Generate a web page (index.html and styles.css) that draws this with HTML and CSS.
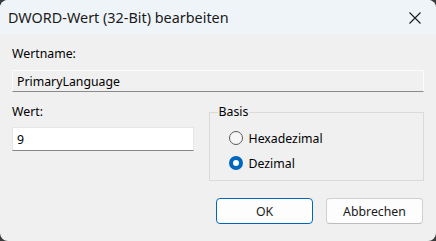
FILE: index.html
```html
<!DOCTYPE html>
<html lang="de">
<head>
    <meta charset="UTF-8">
    <title>DWORD-Wert (32-Bit) bearbeiten</title>
    <link rel="stylesheet" href="styles.css">
</head>
<body>
    <div class="window">
        <div class="titlebar">
            <span class="title">DWORD-Wert (32-Bit) bearbeiten</span>
            <svg class="close" width="12" height="12" viewBox="0 0 12 12">
                <path d="M0.5 0.5 L11.5 11.5 M11.5 0.5 L0.5 11.5" stroke="#1b1b1b" stroke-width="1.1" fill="none"/>
            </svg>
        </div>
        <div class="content">
            <div class="field-label">Wertname:</div>
            <div class="textbox readonly">PrimaryLanguage</div>

            <div class="row">
                <div class="value-col">
                    <div class="field-label">Wert:</div>
                    <div class="textbox value">9</div>
                </div>
                <fieldset class="group">
                    <legend>Basis</legend>
                    <div class="radio">
                        <span class="dot"></span>
                        <span>Hexadezimal</span>
                    </div>
                    <div class="radio">
                        <span class="dot checked"></span>
                        <span>Dezimal</span>
                    </div>
                </fieldset>
            </div>

            <div class="buttons">
                <button class="btn primary">OK</button>
                <button class="btn">Abbrechen</button>
            </div>
        </div>
    </div>
</body>
</html>
```
FILE: styles.css
```css
html, body {
    margin: 0;
    padding: 0;
    background: #3a3a3a;
}

.window {
    width: 436px;
    height: 241px;
    background-color: #f0f0f0;
    border-radius: 8px;
    overflow: hidden;
    font-family: "Noto Sans", "Open Sans", sans-serif;
    font-size: 12.3px;
    color: #000;
}

.titlebar {
    height: 35px;
    background-color: #eff4f9;
    display: flex;
    align-items: center;
    justify-content: space-between;
    padding: 0 15px 0 8px;
    box-sizing: border-box;
}

.title {
    font-size: 14.4px;
    color: #1a1a1a;
    margin-top: -1px;
}

.close {
    display: block;
}

.content {
    padding: 11px 12px 0 12px;
}

.field-label {
    line-height: 16px;
    height: 16px;
}

.textbox {
    box-sizing: border-box;
    border: 1px solid #fafafa;
    border-bottom-color: #868686;
    padding: 0 4px;
    display: flex;
    align-items: center;
}

.readonly {
    margin-top: 8px;
    height: 22px;
    background-color: #f0f0f0;
    border-color: #fbfbfb;
    border-bottom: 1px solid #8a8a8a;
}

.row {
    display: flex;
    gap: 15px;
    margin-top: 12px;
}

.value-col {
    width: 182px;
}

.value {
    margin-top: 7px;
    height: 24px;
    background-color: #fff;
    border-color: #e6e6e6;
    border-bottom-color: #868686;
}

.group {
    margin: 0;
    padding: 9px 0 0 19px;
    width: 216px;
    height: 77px;
    box-sizing: border-box;
    border: 1px solid #dadada;
    border-radius: 0;
    display: flex;
    flex-direction: column;
    gap: 7px;
    font-size: 12px;
}

.group legend {
    padding: 0 1px;
    margin-left: -11px;
    line-height: 16px;
    font-size: 12.3px;
}

.radio {
    display: flex;
    align-items: center;
    gap: 6px;
    height: 18px;
    font-size: 12.3px;
}

.dot {
    width: 14px;
    height: 14px;
    box-sizing: border-box;
    border: 1px solid #5a5a5a;
    border-radius: 50%;
    background: #f6f6f6;
}

.dot.checked {
    border: 4.5px solid #0067c0;
    background: #fff;
}

.buttons {
    display: flex;
    justify-content: flex-end;
    gap: 13px;
    margin-top: 17px;
    padding-right: 1px;
}

.btn {
    font-family: inherit;
    font-size: 12.3px;
    height: 26px;
    width: 97px;
    background-color: #fdfdfd;
    border: 1px solid #d0d0d0;
    border-bottom-color: #bdbdbd;
    border-radius: 4px;
    color: #1a1a1a;
    padding: 0;
}

.btn.primary {
    border: 1px solid #0067c0;
    box-shadow: inset 0 0 0 1px #ffffff;
}
```
